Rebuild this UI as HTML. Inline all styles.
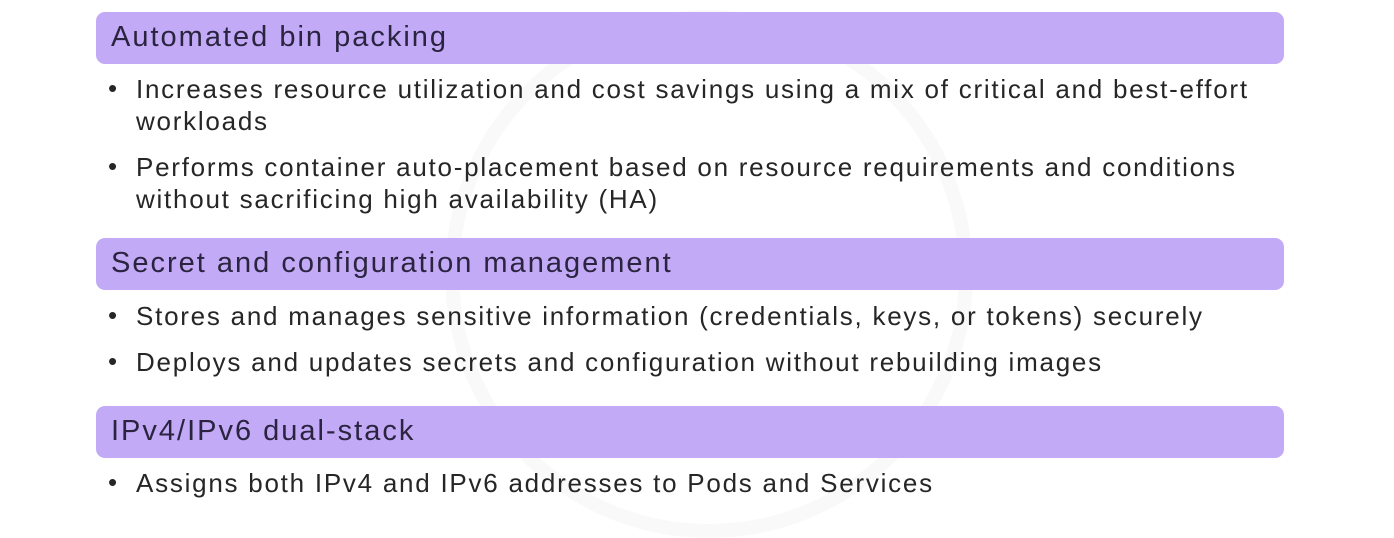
<!DOCTYPE html>
<html><head><meta charset="utf-8"><style>
body{margin:0;width:1394px;height:514px;background:#fff;font-family:"Liberation Sans",sans-serif;position:relative;overflow:hidden;color:#262626}
.bar{position:absolute;left:96px;width:1188px;height:52px;background:#c3aaf6;border-radius:9px}
.bar span{position:absolute;left:15px;top:9px;font-size:29px;letter-spacing:2px;color:#2a2440}
.t{position:absolute;left:136px;font-size:26px;line-height:32px;white-space:nowrap;letter-spacing:1.75px}
.b{position:absolute;left:108px;font-size:26px}
.wm{position:absolute;left:445px;top:10px;width:500px;height:500px;border-radius:50%;border:14px solid #f9f9f9}
</style></head><body>
<div class="wm"></div>
<div class="bar" style="top:12px"><span>Automated bin packing</span></div>
<div class="b" style="top:73px">•</div>
<div class="t" style="top:73px">Increases resource utilization and cost savings using a mix of critical and best-effort<br>workloads</div>
<div class="b" style="top:151px">•</div>
<div class="t" style="top:151px">Performs container auto-placement based on resource requirements and conditions<br>without sacrificing high availability (HA)</div>
<div class="bar" style="top:238px"><span>Secret and configuration management</span></div>
<div class="b" style="top:300px">•</div>
<div class="t" style="top:300px">Stores and manages sensitive information (credentials, keys, or tokens) securely</div>
<div class="b" style="top:346px">•</div>
<div class="t" style="top:346px">Deploys and updates secrets and configuration without rebuilding images</div>
<div class="bar" style="top:406px"><span>IPv4/IPv6 dual-stack</span></div>
<div class="b" style="top:467px">•</div>
<div class="t" style="top:467px">Assigns both IPv4 and IPv6 addresses to Pods and Services</div>
</body></html>
